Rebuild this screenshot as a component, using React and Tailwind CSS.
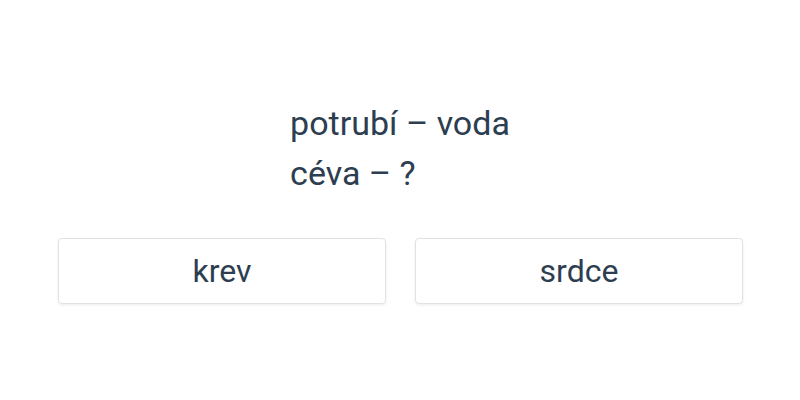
import React from 'react';

const answers = ['krev', 'srdce'];

export default function App() {
    return (
        <div className="w-[800px] h-[400px] bg-white text-[#2c3e50] font-['Roboto',sans-serif] flex flex-col">
            <div className="pt-[98px] flex justify-center">
                <div className="text-[34px] leading-[50px]">
                    <p>potrubí – voda</p>
                    <p>céva – ?</p>
                </div>
            </div>
            <div className="mt-[40px] pl-[58px] pr-[57px] grid grid-cols-2 gap-[29px]">
                {answers.map((a) => (
                    <button
                        key={a}
                        className="h-[66px] rounded border border-[#e2e2e2] bg-white shadow-[0_1px_3px_rgba(0,0,0,0.08)] text-[32px]"
                    >
                        {a}
                    </button>
                ))}
            </div>
        </div>
    );
}
